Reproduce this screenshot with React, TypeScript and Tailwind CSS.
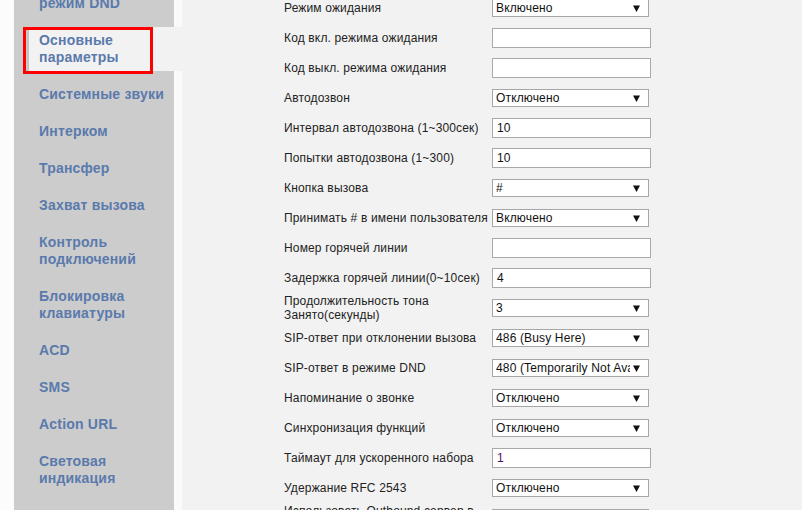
import React from "react";

type NavItem = { lines: string[]; active?: boolean };

const navItems: NavItem[] = [
  { lines: ["Переадресация и", "режим DND"] },
  { lines: ["Основные", "параметры"], active: true },
  { lines: ["Системные звуки"] },
  { lines: ["Интерком"] },
  { lines: ["Трансфер"] },
  { lines: ["Захват вызова"] },
  { lines: ["Контроль", "подключений"] },
  { lines: ["Блокировка", "клавиатуры"] },
  { lines: ["ACD"] },
  { lines: ["SMS"] },
  { lines: ["Action URL"] },
  { lines: ["Световая", "индикация"] },
];

type Row = {
  label: string[];
  kind: "select" | "input";
  value: string;
  accent?: boolean;
};

const rows: Row[] = [
  { label: ["Режим ожидания"], kind: "select", value: "Включено" },
  { label: ["Код вкл. режима ожидания"], kind: "input", value: "" },
  { label: ["Код выкл. режима ожидания"], kind: "input", value: "" },
  { label: ["Автодозвон"], kind: "select", value: "Отключено" },
  { label: ["Интервал автодозвона (1~300сек)"], kind: "input", value: "10" },
  { label: ["Попытки автодозвона (1~300)"], kind: "input", value: "10" },
  { label: ["Кнопка вызова"], kind: "select", value: "#" },
  { label: ["Принимать # в имени пользователя"], kind: "select", value: "Включено" },
  { label: ["Номер горячей линии"], kind: "input", value: "" },
  { label: ["Задержка горячей линии(0~10сек)"], kind: "input", value: "4" },
  { label: ["Продолжительность тона", "Занято(секунды)"], kind: "select", value: "3" },
  { label: ["SIP-ответ при отклонении вызова"], kind: "select", value: "486 (Busy Here)" },
  { label: ["SIP-ответ в режиме DND"], kind: "select", value: "480 (Temporarily Not Available)" },
  { label: ["Напоминание о звонке"], kind: "select", value: "Отключено" },
  { label: ["Синхронизация функций"], kind: "select", value: "Отключено" },
  { label: ["Таймаут для ускоренного набора"], kind: "input", value: "1", accent: true },
  { label: ["Удержание RFC 2543"], kind: "select", value: "Отключено" },
  { label: ["Использовать Outbound сервер в", "режиме ожидания"], kind: "select", value: "Отключено" },
];

function SelectBox({ value }: { value: string }) {
  return (
    <div className="flex items-center w-[157px] h-[18px] bg-white border border-[#a6a6a6] pl-[3px] pr-[8px]">
      <span className="flex-1 overflow-hidden whitespace-nowrap leading-[16px] text-[#111]">
        {value}
      </span>
      <svg width="7" height="7" viewBox="0 0 7 7" className="ml-[3px] shrink-0">
        <path d="M0 0.5 H7 L3.5 7 Z" fill="#111" />
      </svg>
    </div>
  );
}

function InputBox({ value, accent }: { value: string; accent?: boolean }) {
  return (
    <div
      className={`w-[159px] h-[20px] bg-white border border-[#a9a9a9] pl-[4px] leading-[18px] ${
        accent ? "text-[#4b1060]" : "text-[#111]"
      }`}
    >
      {value}
    </div>
  );
}

export default function App() {
  return (
    <div
      className="flex w-[805px] h-[510px] overflow-hidden bg-white"
      style={{ fontFamily: '"Liberation Sans", Arial, sans-serif' }}
    >
      <div className="w-[14px] shrink-0 bg-[#fcfcfc]" />

      {/* Sidebar */}
      <div className="w-[160px] shrink-0 bg-[#cccccc] relative z-10">
        <div className="flex flex-col gap-[10px] -mt-[27px]">
          {navItems.map((item, i) => (
            <div
              key={i}
              className={`relative ml-[13px] -mr-[8px] py-[5px] pl-[12px] text-[14px] leading-[17px] font-bold tracking-[0.2px] text-[#5a7aac] ${
                item.active ? "bg-[#f2f2f2] shadow-[inset_2px_0_0_#c4c4c4]" : ""
              }`}
            >
              {item.lines.map((l, j) => (
                <div key={j} className="whitespace-nowrap">
                  {l}
                </div>
              ))}
              {item.active && (
                <div className="absolute -left-[4px] top-0 w-[130px] h-[47px] border-[3px] border-[#ff0000]" />
              )}
            </div>
          ))}
        </div>
      </div>

      <div className="w-[8px] shrink-0 bg-[#fafafa]" />

      {/* Main form */}
      <div className="w-[620px] shrink-0 bg-[#f2f2f2] pl-[102px]">
        <div className="-mt-[7px] text-[12px] text-[#222] tracking-[0.15px]">
          {rows.map((r, i) => (
            <div key={i} className="flex items-center h-[30px]">
              <div className="w-[208px] shrink-0 leading-[14px]">
                {r.label.map((l, j) => (
                  <div key={j} className="whitespace-nowrap">
                    {l}
                  </div>
                ))}
              </div>
              {r.kind === "select" ? (
                <SelectBox value={r.value} />
              ) : (
                <InputBox value={r.value} accent={r.accent} />
              )}
            </div>
          ))}
        </div>
      </div>

      <div className="flex-1 bg-white" />
    </div>
  );
}
